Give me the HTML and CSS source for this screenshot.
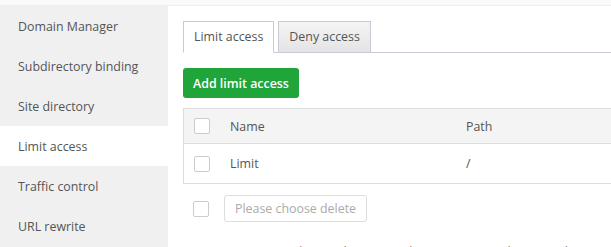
FILE: index.html
```html
<!DOCTYPE html>
<html lang="en">

<head>
  <meta charset="UTF-8">
  <meta name="viewport" content="width=device-width, initial-scale=1.0">
  <title>Limit access</title>
  <link rel="stylesheet" href="styles.css">
</head>

<body>
  <div class="topbar"></div>
  <div class="layout">
    <ul class="menu">
      <li>Domain Manager</li>
      <li>Subdirectory binding</li>
      <li>Site directory</li>
      <li class="active">Limit access</li>
      <li>Traffic control</li>
      <li>URL rewrite</li>
    </ul>
    <div class="content">
      <div class="tabs">
        <span class="tab on">Limit access</span>
        <span class="tab">Deny access</span>
      </div>
      <button class="btn-add">Add limit access</button>
      <div class="table">
        <div class="row head">
          <span class="cell check"><i class="box"></i></span>
          <span class="cell name">Name</span>
          <span class="cell path">Path</span>
        </div>
        <div class="row">
          <span class="cell check"><i class="box"></i></span>
          <span class="cell name">Limit</span>
          <span class="cell path">/</span>
        </div>
      </div>
      <div class="batch">
        <i class="box"></i>
        <button class="btn-del">Please choose delete</button>
      </div>
      <p class="tips">Limit access to the site directory with a username and password</p>
    </div>
  </div>
</body>

</html>
```

FILE: styles.css
```css
* {
  box-sizing: border-box;
}

body {
  margin: 0;
  width: 611px;
  height: 247px;
  overflow: hidden;
  font-family: "Open Sans", "Noto Sans", sans-serif;
  font-size: 12.4px;
  color: #555;
  background: #fff;
}

.topbar {
  height: 6px;
  background: #fafafa;
  border-bottom: 1px solid #eee;
}

.layout {
  display: flex;
}

.menu {
  list-style: none;
  margin: 0;
  padding: 0;
  width: 168px;
  flex-shrink: 0;
  background: #f0f0f0;
}

.menu li {
  height: 40px;
  line-height: 40px;
  padding: 1px 0 0 18px;
  color: #555;
  white-space: nowrap;
}

.menu li.active {
  background: #fff;
}

.content {
  flex: 1;
  padding: 15px 0 0 15px;
}

.tabs {
  display: flex;
  gap: 4px;
  height: 32px;
  border-bottom: 1px solid #ccc8d8;
}

.tab {
  height: 32px;
  line-height: 30px;
  padding: 0 10px;
  border: 1px solid #ccc8d8;
  color: #555;
  background: linear-gradient(#f4f4f4, #e4e4e4);
}

.tab.on {
  background: #fff;
  border-bottom-color: #fff;
}

.btn-add {
  display: block;
  margin-top: 15px;
  height: 30px;
  padding: 0 10px;
  border: none;
  border-radius: 3px;
  background: #20a53a;
  color: #fff;
  font-family: inherit;
  font-size: 12.4px;
  font-weight: 600;
}

.table {
  margin-top: 10px;
  border: 1px solid #ddd;
  border-right: none;
}

.row {
  display: flex;
  align-items: center;
  height: 39px;
}

.row.head {
  height: 35px;
  background: #f4f4f4;
  border-bottom: 1px solid #ddd;
}

.cell.check {
  width: 46px;
  padding-left: 10px;
  display: flex;
}

.cell.name {
  width: 236px;
}

.box {
  display: inline-block;
  width: 16px;
  height: 16px;
  border: 1px solid #ccc;
  border-radius: 2px;
  background: #fff;
}

.batch {
  display: flex;
  align-items: center;
  gap: 15px;
  margin-top: 11px;
  padding-left: 10px;
}

.btn-del {
  height: 27px;
  padding: 0 10px;
  border: 1px solid #ddd;
  border-radius: 3px;
  background: #fff;
  color: #aaa;
  font-family: inherit;
  font-size: 12.4px;
}

.tips {
  margin: 21px 0 0;
  padding-left: 27px;
  color: #777;
  font-size: 12px;
  white-space: nowrap;
}
```
